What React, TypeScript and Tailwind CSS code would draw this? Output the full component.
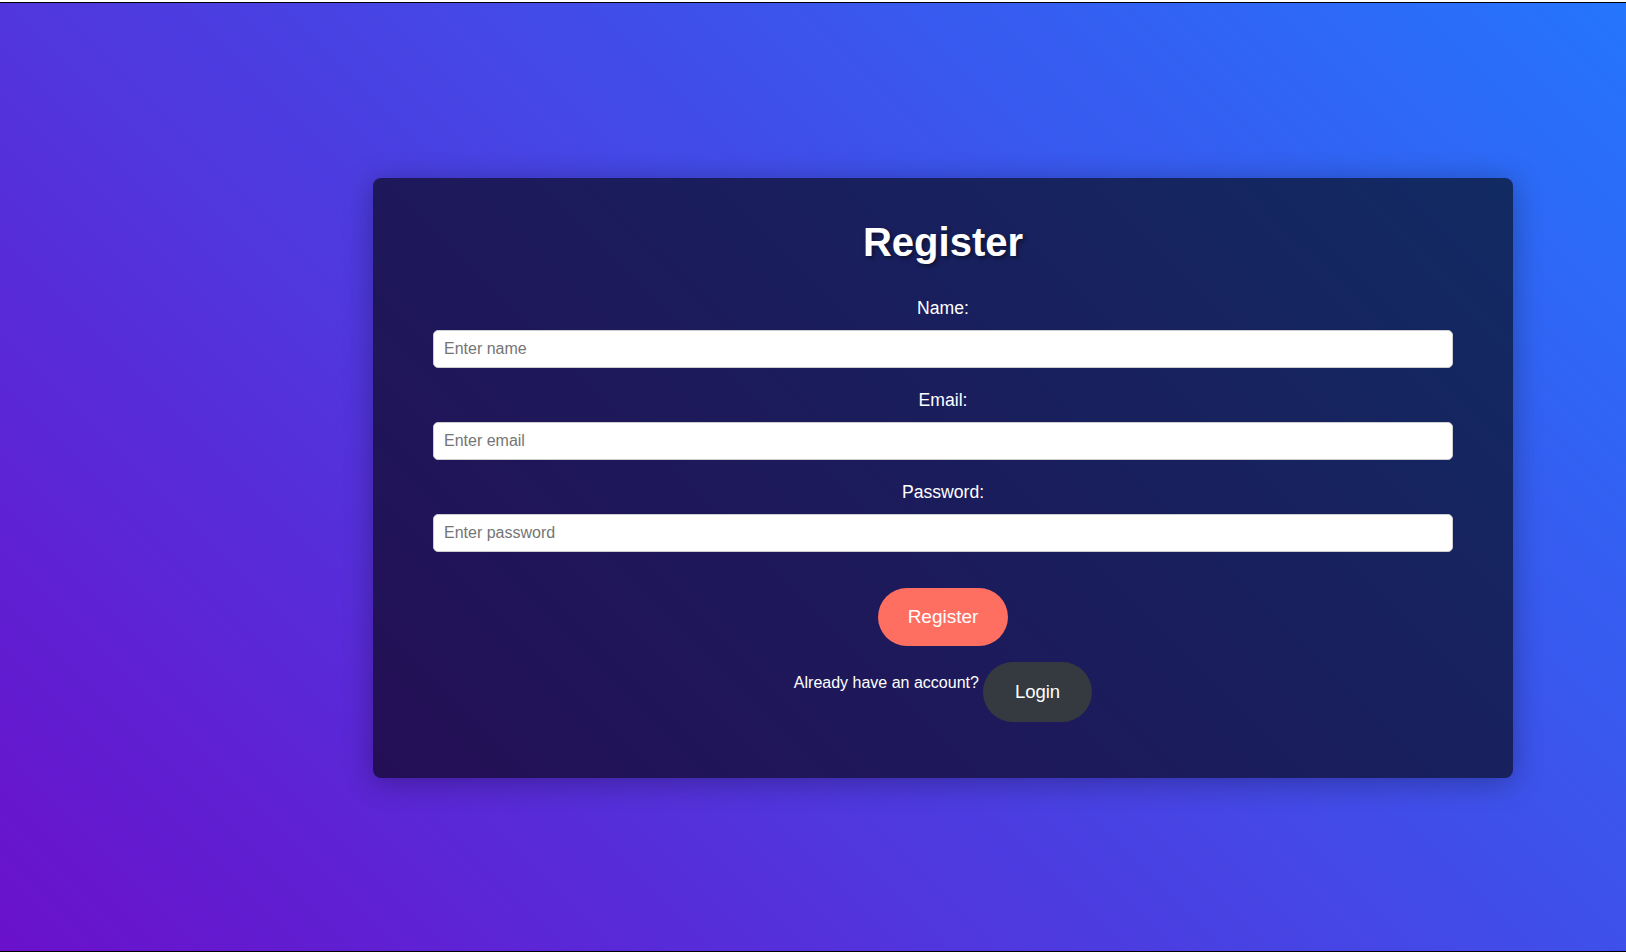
import { useState } from 'react';

/**
 * Register page
 * Dark translucent card on a purple-to-blue gradient.
 */
export default function App() {
  const [name, setName] = useState('');
  const [email, setEmail] = useState('');
  const [password, setPassword] = useState('');

  const handleSubmit = (e: React.FormEvent<HTMLFormElement>) => {
    e.preventDefault();
  };

  const labelClass = 'block text-center text-[17.6px] leading-[20px] text-white mb-[12px]';
  const inputClass =
    'block w-full px-[10px] py-[9px] text-[16px] leading-[18px] text-[#333] bg-white border border-[#ccc] rounded-[5px] placeholder:text-[#757575] outline-none';

  return (
    <div className="h-screen flex flex-col bg-white pt-[2px] font-['Liberation_Sans',Arial,sans-serif]">
      <div className="flex-1 flex items-center justify-center pl-[260px] border-t border-b border-black bg-[linear-gradient(45deg,#6a11cb,#2575fc)]">
        <div className="w-[1140px] mt-[2px] px-[60px] pt-[41px] pb-[56px] rounded-[8px] bg-black/60 shadow-[0_4px_30px_rgba(0,0,0,0.3)]">
          <h1 className="text-center text-[40px] leading-[46px] font-bold text-white mb-[33px] [text-shadow:2px_2px_4px_rgba(0,0,0,0.5)]">
            Register
          </h1>

          <form onSubmit={handleSubmit}>
            {/* Name */}
            <div className="mb-[22px]">
              <label htmlFor="name" className={labelClass}>
                Name:
              </label>
              <input
                id="name"
                type="text"
                value={name}
                onChange={(e) => setName(e.target.value)}
                placeholder="Enter name"
                className={inputClass}
              />
            </div>

            {/* Email */}
            <div className="mb-[22px]">
              <label htmlFor="email" className={labelClass}>
                Email:
              </label>
              <input
                id="email"
                type="email"
                value={email}
                onChange={(e) => setEmail(e.target.value)}
                placeholder="Enter email"
                className={inputClass}
              />
            </div>

            {/* Password */}
            <div>
              <label htmlFor="password" className={labelClass}>
                Password:
              </label>
              <input
                id="password"
                type="password"
                value={password}
                onChange={(e) => setPassword(e.target.value)}
                placeholder="Enter password"
                className={inputClass}
              />
            </div>

            <div className="flex justify-center mt-[36px]">
              <button
                type="submit"
                className="h-[58px] px-[30px] rounded-full bg-[#ff6f61] text-white text-[19px] leading-[22px]"
              >
                Register
              </button>
            </div>
          </form>

          <div className="flex justify-center items-start mt-[16px]">
            <p className="mt-[12px] text-[16px] leading-[18px] text-white">Already have an account?</p>
            <button className="ml-[4px] h-[60px] px-[32px] rounded-full bg-[#343a40] text-white text-[18.5px] leading-[22px]">
              Login
            </button>
          </div>
        </div>
      </div>
    </div>
  );
}
